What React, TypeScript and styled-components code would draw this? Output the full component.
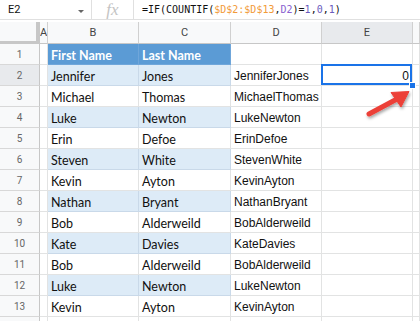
import React from "react";
import styled, { createGlobalStyle } from "styled-components";

const Global = createGlobalStyle`
  html, body { margin: 0; padding: 0; background: #fff; overflow: hidden; }
  body { width: 420px; height: 321px; }
`;

const Page = styled.div`
  position: relative;
  width: 420px;
  height: 321px;
  overflow: hidden;
  background: #fff;
`;

const FormulaBar = styled.div`
  display: flex;
  align-items: center;
  height: 19px;
  border-bottom: 1px solid #e0e0e0;
  margin-bottom: 2px;
`;

const NameBox = styled.div`
  width: 91px;
  box-sizing: border-box;
  display: flex;
  align-items: center;
  justify-content: space-between;
  padding: 0 7px 0 8px;
  font-family: Roboto, "Liberation Sans", sans-serif;
  font-size: 11px;
  color: #111;
`;

const Caret = styled.span`
  width: 0;
  height: 0;
  border-left: 3px solid transparent;
  border-right: 3px solid transparent;
  border-top: 3px solid #666;
  margin-top: 3px;
`;

const Divider = styled.div`
  width: 1px;
  align-self: stretch;
  background: #e0e0e0;
`;

const Fx = styled.div`
  width: 41px;
  text-align: center;
  font-family: "Liberation Serif", "DejaVu Serif", serif;
  font-style: italic;
  font-size: 17px;
  color: #c4c4c4;
  line-height: 19px;
`;

const Formula = styled.div`
  padding-left: 8px;
  font-family: "DejaVu Sans Mono", "Liberation Mono", monospace;
  font-size: 10px;
  color: #111;
  white-space: nowrap;
`;

const Tok = styled.span<{ $c: string }>`
  color: ${(p) => p.$c};
`;

const Grid = styled.div`
  display: grid;
  grid-template-columns: 40px 8px 91px 92px 91px 91px 1fr;
  grid-template-rows: 22px;
  grid-auto-rows: 21px;
`;

const Corner = styled.div`
  background: #f8f9fa;
  border-right: 4px solid #c7c7c7;
  border-bottom: 3px solid #c7c7c7;
`;

const ColHead = styled.div<{ $active?: boolean }>`
  display: flex;
  align-items: center;
  justify-content: center;
  background: ${(p) => (p.$active ? "#e8eaed" : "#f8f9fa")};
  border-right: 1px solid #d0d0d0;
  border-bottom: 1px solid #c7c7c7;
  font-family: Roboto, "Liberation Sans", sans-serif;
  font-size: 11px;
  color: #444;
  overflow: hidden;
`;

const RowHead = styled.div<{ $active?: boolean }>`
  display: flex;
  align-items: center;
  justify-content: center;
  background: ${(p) => (p.$active ? "#e8eaed" : "#f8f9fa")};
  border-right: 1px solid #c7c7c7;
  border-bottom: 1px solid #d8d8d8;
  font-family: Roboto, "Liberation Sans", sans-serif;
  font-size: 10px;
  color: #666;
`;

type Tone = "head" | "band" | "plain";

const Cell = styled.div<{
  $tone?: Tone;
  $arial?: boolean;
  $right?: boolean;
  $selected?: boolean;
}>`
  position: relative;
  display: flex;
  align-items: flex-end;
  justify-content: ${(p) => (p.$right ? "flex-end" : "flex-start")};
  padding: 0 3px 1px 3px;
  min-width: 0;
  overflow: visible;
  white-space: nowrap;
  background: ${(p) =>
    p.$tone === "head" ? "#5b9bd5" : p.$tone === "band" ? "#ddebf7" : "#fff"};
  border-right: 1px solid
    ${(p) => (p.$tone === "head" ? "#6fa6da" : p.$tone === "band" ? "#c9d9e9" : "#e2e3e3")};
  border-bottom: 1px solid
    ${(p) => (p.$tone === "head" ? "#6fa6da" : p.$tone === "band" ? "#c9d9e9" : "#e2e3e3")};
  font-family: ${(p) =>
    p.$arial ? '"Liberation Sans", Arial, sans-serif' : 'Lato, "Open Sans", sans-serif'};
  font-size: ${(p) => (p.$arial ? "12px" : "12.5px")};
  font-weight: ${(p) => (p.$tone === "head" ? 700 : 400)};
  color: ${(p) => (p.$tone === "head" ? "#fff" : "#111")};
  line-height: 15px;
  z-index: ${(p) => (p.$selected ? 2 : "auto")};

  ${(p) =>
    p.$selected &&
    `
    &::before {
      content: "";
      position: absolute;
      top: -1px; left: -1px; right: 0; bottom: 0;
      border: 2px solid #1a73e8;
      pointer-events: none;
    }
    &::after {
      content: "";
      position: absolute;
      right: -4px; bottom: -4px;
      width: 5px; height: 5px;
      background: #1a73e8;
      border: 1px solid #fff;
    }
  `}
`;

const ArrowLayer = styled.svg`
  position: absolute;
  left: 0;
  top: 0;
  width: 420px;
  height: 321px;
  pointer-events: none;
  z-index: 5;
  overflow: visible;
`;

const data: [string, string][] = [
  ["Jennifer", "Jones"],
  ["Michael", "Thomas"],
  ["Luke", "Newton"],
  ["Erin", "Defoe"],
  ["Steven", "White"],
  ["Kevin", "Ayton"],
  ["Nathan", "Bryant"],
  ["Bob", "Alderweild"],
  ["Kate", "Davies"],
  ["Bob", "Alderweild"],
  ["Luke", "Newton"],
  ["Kevin", "Ayton"],
];

const ORANGE = "#f29b38";
const PURPLE = "#8a5fcf";
const NUM = "#6b5bbd";

export default function App() {
  return (
    <Page>
      <Global />
      <FormulaBar>
        <NameBox>
          E2
          <Caret />
        </NameBox>
        <Divider />
        <Fx>fx</Fx>
        <Divider />
        <Formula>
          <Tok $c="#111">=IF(COUNTIF(</Tok>
          <Tok $c={ORANGE}>$D$2:$D$13</Tok>
          <Tok $c="#111">,</Tok>
          <Tok $c={PURPLE}>D2</Tok>
          <Tok $c="#111">)=</Tok>
          <Tok $c={NUM}>1</Tok>
          <Tok $c="#111">,</Tok>
          <Tok $c={NUM}>0</Tok>
          <Tok $c="#111">,</Tok>
          <Tok $c={NUM}>1</Tok>
          <Tok $c="#111">)</Tok>
        </Formula>
      </FormulaBar>
      <Grid>
        <Corner />
        <ColHead>A</ColHead>
        <ColHead>B</ColHead>
        <ColHead>C</ColHead>
        <ColHead>D</ColHead>
        <ColHead $active>E</ColHead>
        <ColHead />

        <RowHead>1</RowHead>
        <Cell />
        <Cell $tone="head">First Name</Cell>
        <Cell $tone="head">Last Name</Cell>
        <Cell />
        <Cell />
        <Cell />

        {data.map(([f, l], i) => {
          const r = i + 2;
          const tone: Tone = r % 2 === 0 ? "band" : "plain";
          return (
            <React.Fragment key={r}>
              <RowHead $active={r === 2}>{r}</RowHead>
              <Cell />
              <Cell $tone={tone}>{f}</Cell>
              <Cell $tone={tone}>{l}</Cell>
              <Cell $arial>{f + l}</Cell>
              {r === 2 ? (
                <Cell $arial $right $selected>
                  0
                </Cell>
              ) : (
                <Cell />
              )}
              <Cell />
            </React.Fragment>
          );
        })}

        <RowHead />
        <Cell />
        <Cell />
        <Cell />
        <Cell />
        <Cell />
        <Cell />
      </Grid>
      <ArrowLayer viewBox="0 0 420 321">
        <defs>
          <filter id="sh" x="-20%" y="-20%" width="160%" height="160%">
            <feDropShadow dx="1" dy="2" stdDeviation="1.4" floodColor="#000" floodOpacity="0.35" />
          </filter>
        </defs>
        <g filter="url(#sh)" fill="#ec4038" stroke="#ec4038">
          <line x1="369" y1="114" x2="397" y2="99" strokeWidth="5" strokeLinecap="round" />
          <polygon points="409,91.5 391,92.5 401,107" strokeWidth="1" strokeLinejoin="round" />
        </g>
      </ArrowLayer>
    </Page>
  );
}
